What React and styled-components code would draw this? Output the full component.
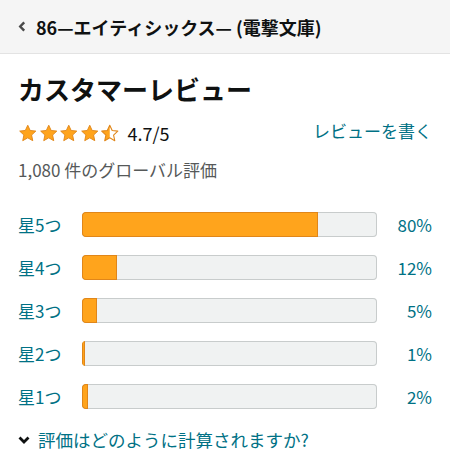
import React from "react";
import styled, { createGlobalStyle } from "styled-components";

const GlobalStyle = createGlobalStyle`
  body {
    margin: 0;
    background: #fff;
    font-family: "Noto Sans CJK JP", "Noto Sans", sans-serif;
    color: #0f1111;
  }
`;

const Page = styled.div`
  width: 450px;
`;

const TopBar = styled.div`
  display: flex;
  align-items: center;
  gap: 10px;
  height: 53px;
  padding-left: 18px;
  background: #f5f5f5;
  border-bottom: 1px solid #e3e3e3;
  font-size: 18px;
  font-weight: 700;
  color: #0f1111;
`;

const Body = styled.div`
  padding: 18px 18px 0;
`;

const Title = styled.h2`
  margin: 0;
  font-size: 26px;
  line-height: 34px;
  font-weight: 700;
`;

const RatingRow = styled.div`
  display: flex;
  align-items: center;
  justify-content: space-between;
  height: 24px;
  margin-top: 15px;
`;

const Stars = styled.div`
  display: flex;
  align-items: center;
  gap: 8px;
  font-size: 18px;
`;

const StarList = styled.div`
  display: flex;
  gap: 1px;
`;

const Link = styled.a`
  color: #007185;
  font-size: 17px;
  text-decoration: none;
  margin-top: -5px;
`;

const Count = styled.div`
  margin-top: 13px;
  line-height: 24px;
  font-size: 17px;
  color: #565959;
`;

const Histogram = styled.div`
  margin-top: 21px;
  display: grid;
  grid-template-columns: 64px 295px 1fr;
  grid-auto-rows: 43px;
  align-items: center;
  font-size: 17px;
  color: #007185;
`;

const Pct = styled.span`
  text-align: right;
`;

const Track = styled.div`
  height: 25px;
  border-radius: 4px;
  background: #f0f2f2;
  box-shadow: inset 0 0 0 1px #c8cccc;
  overflow: hidden;
  display: flex;
`;

const Fill = styled.div`
  height: 100%;
  background: #ffa41c;
  box-shadow: inset 0 0 0 1px #e0861a;
  border-radius: 4px 0 0 4px;
`;

const Footer = styled.div`
  display: flex;
  align-items: center;
  gap: 8px;
  margin-top: 10px;
  line-height: 24px;
  font-size: 17.5px;
  color: #007185;
`;

const STAR = "M12 1.6l3.1 6.7 7.2.8-5.4 5 1.5 7.2L12 17.7l-6.4 3.6 1.5-7.2-5.4-5 7.2-.8z";

function Star({ half }) {
  return (
    <svg width="19.5" height="18" viewBox="0 0 24 23">
      <defs>
        <clipPath id="halfclip">
          <rect x="0" y="0" width="12" height="23" />
        </clipPath>
      </defs>
      {half ? (
        <>
          <path d={STAR} fill="#ffa41c" clipPath="url(#halfclip)" />
          <path d={STAR} fill="none" stroke="#e0861a" strokeWidth="1.4" strokeLinejoin="round" />
        </>
      ) : (
        <path d={STAR} fill="#ffa41c" stroke="#e0861a" strokeWidth="1.2" strokeLinejoin="round" />
      )}
    </svg>
  );
}

const rows = [
  { label: "星5つ", pct: 80 },
  { label: "星4つ", pct: 12 },
  { label: "星3つ", pct: 5 },
  { label: "星2つ", pct: 1 },
  { label: "星1つ", pct: 2 },
];

export default function App() {
  return (
    <Page>
      <GlobalStyle />
      <TopBar>
        <svg width="8" height="11" viewBox="0 0 8 11">
          <path d="M6.2 1.3L2.2 5.5l4 4.2" fill="none" stroke="#4a4a4a" strokeWidth="2.4" />
        </svg>
        86—エイティシックス— (電撃文庫)
      </TopBar>
      <Body>
        <Title>カスタマーレビュー</Title>
        <RatingRow>
          <Stars>
            <StarList>
              {[0, 1, 2, 3].map((i) => (
                <Star key={i} />
              ))}
              <Star half />
            </StarList>
            <span>4.7/5</span>
          </Stars>
          <Link href="#">レビューを書く</Link>
        </RatingRow>
        <Count>1,080 件のグローバル評価</Count>
        <Histogram>
          {rows.map((r) => (
            <React.Fragment key={r.label}>
              <span>{r.label}</span>
              <Track>
                <Fill style={{ width: `${r.pct}%` }} />
              </Track>
              <Pct>{r.pct}%</Pct>
            </React.Fragment>
          ))}
        </Histogram>
        <Footer>
          <svg width="12" height="8" viewBox="0 0 12 8">
            <path d="M1.5 1.5l4.5 4.5 4.5-4.5" fill="none" stroke="#0f1111" strokeWidth="2.8" />
          </svg>
          評価はどのように計算されますか?
        </Footer>
      </Body>
    </Page>
  );
}
